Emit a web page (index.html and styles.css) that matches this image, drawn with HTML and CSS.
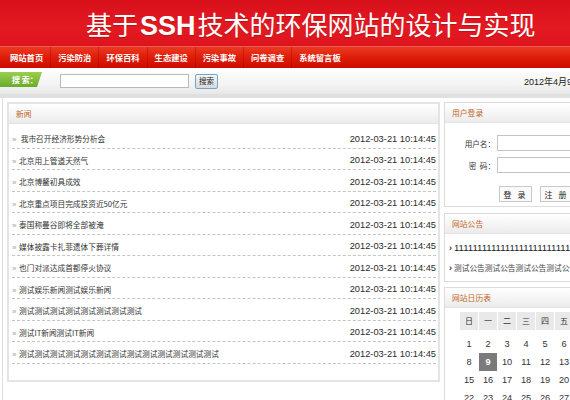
FILE: index.html
```html
<!DOCTYPE html>
<html lang="zh-CN">
<head>
<meta charset="utf-8">
<title>基于SSH技术的环保网站的设计与实现</title>
<link rel="stylesheet" href="styles.css">
</head>
<body>
<div class="page">
  <header class="banner">
    <h1 class="title">基于<b class="ssh">SSH</b>技术的环保网站的设计与实现</h1>
  </header>
  <nav class="nav">
    <a class="nav-item">网站首页</a>
    <a class="nav-item">污染防治</a>
    <a class="nav-item">环保百科</a>
    <a class="nav-item">生态建设</a>
    <a class="nav-item">污染事故</a>
    <a class="nav-item">问卷调查</a>
    <a class="nav-item">系统留言板</a>
  </nav>
  <div class="searchbar">
    <span class="tag">搜 索：</span>
    <input class="search-input" type="text">
    <button class="search-btn" type="button">搜索</button>
    <span class="today">2012年4月9日 星期一</span>
  </div>
  <div class="band"></div>
  <div class="main">
    <section class="panel news">
      <div class="panel-head">新闻</div>
      <ul class="news-list">
        <li class="news-row"><span class="news-title"><span class="arrow">»</span>&nbsp;我市召开经济形势分析会</span><span class="news-date">2012-03-21 10:14:45</span></li>
        <li class="news-row"><span class="news-title"><span class="arrow">»</span>北京用上管道天然气</span><span class="news-date">2012-03-21 10:14:45</span></li>
        <li class="news-row"><span class="news-title"><span class="arrow">»</span>北京博鳌初具成效</span><span class="news-date">2012-03-21 10:14:45</span></li>
        <li class="news-row"><span class="news-title"><span class="arrow">»</span>北京重点项目完成投资近50亿元</span><span class="news-date">2012-03-21 10:14:45</span></li>
        <li class="news-row"><span class="news-title"><span class="arrow">»</span>泰国称曼谷即将全部被淹</span><span class="news-date">2012-03-21 10:14:45</span></li>
        <li class="news-row"><span class="news-title"><span class="arrow">»</span>媒体披露卡扎菲遗体下葬详情</span><span class="news-date">2012-03-21 10:14:45</span></li>
        <li class="news-row"><span class="news-title"><span class="arrow">»</span>也门对派达成首都停火协议</span><span class="news-date">2012-03-21 10:14:45</span></li>
        <li class="news-row"><span class="news-title"><span class="arrow">»</span>测试娱乐新闻测试娱乐新闻</span><span class="news-date">2012-03-21 10:14:45</span></li>
        <li class="news-row"><span class="news-title"><span class="arrow">»</span>测试测试测试测试测试测试测试测试</span><span class="news-date">2012-03-21 10:14:45</span></li>
        <li class="news-row"><span class="news-title"><span class="arrow">»</span>测试IT新闻测试IT新闻</span><span class="news-date">2012-03-21 10:14:45</span></li>
        <li class="news-row"><span class="news-title"><span class="arrow">»</span>测试测试测试测试测试测试测试测试测试测试测试测试测试</span><span class="news-date">2012-03-21 10:14:45</span></li>
      </ul>
    </section>
    <aside class="side">
      <section class="box login">
        <div class="panel-head">用户登录</div>
        <div class="login-body">
          <label class="login-label">用户名：</label><input class="login-input" type="text">
          <label class="login-label">密&nbsp;&nbsp;码：</label><input class="login-input" type="password">
          <div class="login-actions">
            <button class="login-btn" type="button">登 录</button>
            <button class="login-btn" type="button">注 册</button>
          </div>
        </div>
      </section>
      <section class="box notice">
        <div class="panel-head">网站公告</div>
        <ul class="notice-list">
          <li class="notice-row"><span class="notice-arrow">›</span><span class="notice-num">111111111111111111111111111111111111</span></li>
          <li class="notice-row"><span class="notice-arrow">›</span>测试公告测试公告测试公告测试公告测试公告</li>
        </ul>
      </section>
      <section class="box calendar">
        <div class="panel-head">网站日历表</div>
        <div class="cal-grid">
          <span class="cal-head">日</span><span class="cal-head">一</span><span class="cal-head">二</span><span class="cal-head">三</span><span class="cal-head">四</span><span class="cal-head">五</span><span class="cal-head">六</span>
          <span class="cal-day">1</span><span class="cal-day">2</span><span class="cal-day">3</span><span class="cal-day">4</span><span class="cal-day">5</span><span class="cal-day">6</span><span class="cal-day">7</span>
          <span class="cal-day">8</span><span class="cal-day today-cell">9</span><span class="cal-day">10</span><span class="cal-day">11</span><span class="cal-day">12</span><span class="cal-day">13</span><span class="cal-day">14</span>
          <span class="cal-day">15</span><span class="cal-day">16</span><span class="cal-day">17</span><span class="cal-day">18</span><span class="cal-day">19</span><span class="cal-day">20</span><span class="cal-day">21</span>
          <span class="cal-day">22</span><span class="cal-day">23</span><span class="cal-day">24</span><span class="cal-day">25</span><span class="cal-day">26</span><span class="cal-day">27</span><span class="cal-day">28</span>
          <span class="cal-day">29</span><span class="cal-day">30</span>
        </div>
      </section>
    </aside>
  </div>
</div>
</body>
</html>
```

FILE: styles.css
```css
html, body {
  margin: 0;
  padding: 0;
  overflow: hidden;
  background: #fff;
}
body {
  font-family: "Noto Sans CJK SC", "Liberation Sans", sans-serif;
  color: #333;
}
.page {
  width: 640px;
}
ul {
  list-style: none;
  margin: 0;
  padding: 0;
}

/* Banner */
.banner {
  height: 46px;
  background: linear-gradient(#d8101b, #e41a22 60%, #dd141d);
  border-bottom: 1px solid #ee5a55;
}
.title {
  margin: 0;
  padding-left: 86px;
  font-weight: normal;
  font-size: 26px;
  line-height: 48px;
  letter-spacing: 0;
  color: #fff;
  white-space: nowrap;
  text-shadow: 0 1px 1px rgba(120, 0, 0, 0.35);
}
.ssh {
  font-family: "Liberation Sans", sans-serif;
  font-weight: bold;
  font-size: 27px;
  margin: 0 2px;
}

/* Nav */
.nav {
  display: flex;
  height: 21px;
  padding-left: 3px;
  background: linear-gradient(#ec3a22, #de1c08 50%, #cc0c00);
}
.nav-item {
  padding: 0 7px;
  font-size: 8.3px;
  font-weight: bold;
  line-height: 21px;
  color: #fff;
  white-space: nowrap;
  border-right: 1px solid rgba(150, 0, 0, 0.35);
}
.nav-item:last-child {
  border-right: none;
}

/* Search bar */
.searchbar {
  display: flex;
  align-items: center;
  height: 26px;
  background: linear-gradient(#fefefe, #f4f4f4 60%, #e8e8e8);
}
.tag {
  width: 30px;
  height: 15px;
  margin-top: -3px;
  padding-left: 12px;
  font-size: 8px;
  font-weight: bold;
  line-height: 15px;
  color: #fff;
  white-space: nowrap;
  background: linear-gradient(#9bcf4f, #6aab2c);
  clip-path: polygon(0 0, 100% 0, calc(100% - 5px) 100%, 0 100%);
}
.search-input {
  box-sizing: border-box;
  width: 129px;
  height: 14px;
  margin: 0 0 0 18px;
  padding: 0;
  border: 1px solid #b9b9b9;
  background: #fff;
}
.search-btn {
  box-sizing: border-box;
  width: 23px;
  height: 15px;
  margin: 0 0 0 6px;
  padding: 0;
  font-family: "Noto Sans CJK SC", sans-serif;
  font-size: 7.5px;
  line-height: 12px;
  color: #222;
  border: 1px solid #6fa7c8;
  border-radius: 2px;
  background: linear-gradient(#f5f5f5, #d9d9d9);
}
.today {
  margin-left: 306px;
  font-size: 9px;
  color: #222;
  white-space: nowrap;
  font-family: "Liberation Sans", "Noto Sans CJK SC", sans-serif;
}

.band {
  height: 4px;
  background: #e0e0e0;
}

/* Main */
.main {
  display: flex;
  align-items: flex-start;
  margin-left: 2px;
  padding: 4px 0 0 4px;
  border-left: 1px solid #dedede;
  height: 310px;
}
.panel, .box {
  box-sizing: border-box;
  border: 2px solid #e4e4e4;
  background: #fff;
}
.news {
  width: 433px;
  padding-bottom: 16px;
}
.panel-head {
  height: 19px;
  padding-left: 7px;
  font-size: 7.8px;
  line-height: 19px;
  color: #c4652a;
  border-bottom: 1px solid #e4e4e4;
  background: linear-gradient(#ffffff, #f6f6f6 50%, #ebebeb);
  white-space: nowrap;
}
.news-list {
  padding: 3px 2px 0 3px;
}
.news-row {
  box-sizing: border-box;
  display: flex;
  justify-content: space-between;
  align-items: center;
  height: 21.5px;
  padding: 5px 0 2px 0;
  border-bottom: 1px dashed #c4c4c4;
}
.news-title {
  font-size: 7.7px;
  color: #333;
  white-space: nowrap;
}
.arrow {
  display: inline-block;
  width: 7px;
  font-family: "Liberation Sans", sans-serif;
  font-size: 8px;
  color: #a0a0a0;
}
.news-date {
  font-family: "Liberation Sans", sans-serif;
  font-size: 9.3px;
  color: #2a2a2a;
  white-space: nowrap;
}

/* Side column */
.side {
  display: flex;
  flex-direction: column;
  gap: 5px;
  width: 186px;
  margin-left: 4px;
}
.box {
  border-width: 1px;
  border-color: #dcdcdc;
  overflow: hidden;
}
.login-body {
  display: grid;
  grid-template-columns: 50px 110px;
  column-gap: 2px;
  row-gap: 6px;
  align-items: center;
  padding: 12px 0 4px 0;
}
.login-label {
  font-size: 7.6px;
  text-align: right;
  color: #333;
  white-space: nowrap;
}
.login-input {
  box-sizing: border-box;
  width: 110px;
  height: 16px;
  margin: 0;
  border: 1px solid #c4c4c4;
  background: #fff;
}
.login-actions {
  grid-column: 1 / span 2;
  display: flex;
  gap: 8px;
  margin: 7px 0 0 54px;
}
.login-btn {
  box-sizing: border-box;
  width: 33px;
  height: 16px;
  padding: 0;
  font-family: "Noto Sans CJK SC", sans-serif;
  font-size: 8px;
  letter-spacing: 2px;
  color: #222;
  border: 1px solid #c9c9c9;
  background: #fafafa;
}

.notice {
  margin-top: 1px;
}
.notice-list {
  padding: 4px 0 3px 4px;
}
.notice-row {
  height: 20px;
  line-height: 20px;
  font-size: 7.7px;
  color: #444;
  white-space: nowrap;
}
.notice-arrow {
  display: inline-block;
  width: 5px;
  font-family: "Liberation Sans", sans-serif;
  font-size: 9px;
  font-weight: bold;
  color: #334;
}
.notice-num {
  font-family: "Liberation Sans", sans-serif;
  font-size: 9.6px;
  color: #222;
}

.calendar {
  height: 140px;
}
.cal-grid {
  display: grid;
  grid-template-columns: repeat(7, 18px);
  grid-template-rows: 23px;
  grid-auto-rows: 18px;
  column-gap: 1px;
  padding: 4px 0 0 15px;
}
.cal-head {
  align-self: start;
  height: 18px;
  font-size: 8px;
  line-height: 18px;
  text-align: center;
  color: #333;
  background: #e9e9e9;
}
.cal-day {
  font-family: "Liberation Sans", sans-serif;
  font-size: 9.2px;
  line-height: 18px;
  text-align: center;
  color: #333;
}
.today-cell {
  color: #fff;
  font-weight: bold;
  background: #7a7a7a;
}
```
